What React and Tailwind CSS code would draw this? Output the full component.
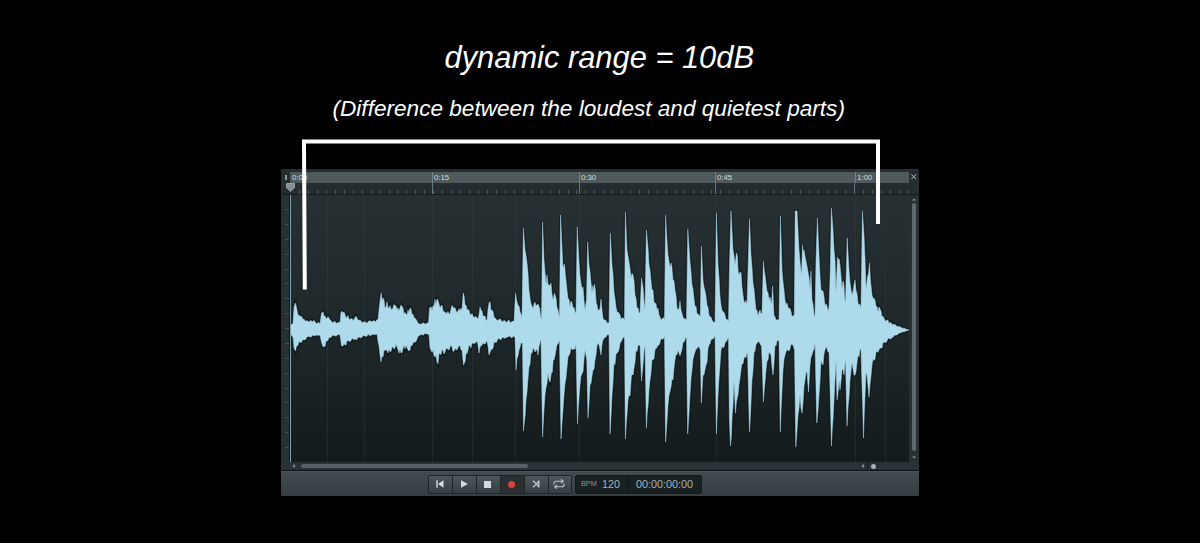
import React from 'react';

// Where the track's own 619x267 area starts
const OFFSET_X = 290;
const OFFSET_Y = 195;

const upper = [
  291, 325, 293, 324, 294, 307, 295.5, 303, 297, 310, 299, 315, 302, 317, 305, 321, 309, 322, 313, 321, 320, 324, 321.5, 313,
  323, 312, 325, 316, 329, 318, 332, 322, 340, 323, 341, 312, 343, 313, 347, 317, 351, 319, 357, 318, 361, 321, 366, 323,
  371, 321, 375, 322, 378, 320, 379, 310, 380.5, 297, 383, 298, 386, 307, 387, 302, 391, 309, 396, 306, 399, 311, 401, 305,
  404, 314, 407, 315, 410, 308, 413, 314, 417, 321, 420, 324, 427, 323, 428.5, 323, 429.5, 308, 432, 311, 434, 306, 437, 299,
  439, 304, 442, 305, 445, 312, 449, 314, 453, 307, 457, 313, 460, 311, 462, 310, 463.2, 293, 466, 305, 469, 310, 473, 316,
  478, 319, 480, 307, 483, 316, 487, 320, 489, 303, 492, 310, 496, 319, 505, 321, 514, 322, 515.5, 293, 517, 302, 520, 312,
  522, 318, 523.4, 228, 525, 250, 527, 263, 528, 273, 530, 298, 532, 306, 536, 306, 538, 304, 541.5, 319, 542.6, 222, 544, 260,
  546, 285, 547, 275, 549, 285, 551, 283, 553, 300, 554.5, 293, 557, 308, 559.5, 318, 560.6, 215, 562, 247, 563, 268,
  564.5, 264, 567, 290, 570, 307, 571, 301, 573, 308, 576, 314, 577.2, 227, 579, 262, 581, 283, 583, 287, 585, 310, 586.5, 300,
  587.7, 242, 589, 265, 592, 293, 594.5, 284, 597, 305, 599, 310, 601, 299, 603, 318, 607, 323, 609, 323, 610.3, 233, 612, 265,
  614, 292, 616, 307, 620, 315, 624.5, 321, 625.4, 212, 627, 250, 629, 262, 631, 278, 633, 275, 635, 295, 638, 308, 640, 313,
  641.5, 278, 643, 287, 645, 310, 646.4, 230, 649, 265, 652, 290, 655, 303, 658, 308, 660, 317, 664.5, 320, 665.6, 215,
  668, 255, 670, 267, 671.5, 263, 673, 280, 675, 290, 678, 310, 680, 301, 683, 317, 686.5, 321, 687.8, 229, 690, 262, 692, 285,
  695, 307, 698, 314, 700.3, 317, 701.4, 246, 703, 280, 706, 296, 709, 315, 713, 322, 715, 323, 716.4, 213, 718, 265, 721, 305,
  725, 315, 728.5, 322, 729.5, 265, 731, 211, 733, 250, 735, 265, 736.5, 253, 739, 275, 741, 272, 743, 295, 747, 305,
  748.3, 260, 749.5, 219, 751, 255, 753, 283, 756, 310, 758, 316, 760, 310, 762, 313, 763.4, 261, 766, 283, 769, 300, 770, 297,
  771.5, 305, 772.6, 286, 774, 316, 779, 321, 780.4, 216, 782, 270, 785, 300, 788, 307, 793, 316, 794.3, 315, 795.2, 211,
  797, 211, 798, 230, 800, 262, 801.5, 276, 802.5, 245, 805, 256, 807, 266, 810, 290, 811, 271, 812, 300, 815, 317, 816, 260,
  817.4, 218, 819, 255, 821, 290, 823, 291, 825, 306, 829, 308, 830.3, 270, 831.4, 208, 833, 230, 835, 260, 836, 293,
  837.5, 257, 840, 265, 842, 290, 843, 281, 845.5, 302, 847.2, 238, 849, 270, 852, 295, 855, 280, 858, 303, 861, 309,
  862.4, 211, 864, 235, 866, 290, 867.5, 277, 869.5, 263, 872, 295, 875, 300, 878, 312, 879, 307, 882, 317, 890, 323, 900, 327,
  909, 330,
];

const lower = [
  291, 334, 293, 337, 294, 348, 295.5, 351, 298, 345, 302, 341, 308, 337, 316, 335, 320, 335, 322, 344, 324, 346, 327, 341,
  332, 336, 340, 335, 341.5, 346, 343, 346, 348, 341, 355, 339, 365, 336, 377, 334, 379, 346, 381, 362, 383, 357, 386, 350,
  388, 353, 392, 347, 397, 347, 401, 353, 404, 345, 409, 351, 412, 346, 417, 339, 420, 335, 427, 334, 429, 335, 430, 348,
  433, 350, 437, 362, 440, 354, 445, 352, 450, 347, 454, 351, 459, 346, 462, 350, 463.5, 365, 466, 353, 470, 346, 475, 343,
  477, 341, 479, 353, 482, 345, 487, 341, 489, 355, 491, 350, 495, 342, 500, 339, 507, 337, 515, 337, 516, 370, 518, 356,
  521, 343, 522.5, 343, 523.5, 431, 526, 400, 529, 367, 531, 353, 536, 350, 538, 355, 541, 339, 542.6, 437, 545, 395, 548, 373,
  550, 382, 551.5, 372, 554, 360, 556, 350, 559.5, 340, 561, 439, 564, 395, 566, 378, 568, 357, 571, 347, 574, 349, 576, 344,
  577.5, 424, 580, 385, 583, 372, 585, 350, 586.8, 360, 588, 418, 590, 385, 593, 370, 595, 360, 598, 343, 601, 355, 603, 340,
  607, 335, 609, 335, 610, 434, 612, 395, 614, 363, 618, 352, 622, 340, 624.5, 337, 625.4, 439, 628, 400, 630, 396, 631.5, 375,
  634, 368, 636, 350, 640, 345, 641.5, 381, 643, 365, 645, 345, 646.4, 428, 649, 390, 652, 360, 658, 345, 664.5, 336,
  665.6, 442, 668, 405, 671, 387, 673, 380, 675, 360, 678, 350, 680, 356, 683, 342, 686.5, 338, 687.7, 434, 690, 395, 692, 370,
  695, 352, 698, 347, 700.3, 350, 701.3, 403, 703, 375, 706, 365, 709, 345, 715, 335, 716.4, 434, 718, 395, 721, 350, 725, 343,
  728.5, 337, 729.4, 420, 730.5, 446, 733, 405, 734, 380, 735.5, 413, 738, 395, 741, 370, 744, 358, 747.5, 352, 749.5, 432,
  752, 380, 754, 353, 758, 342, 761.5, 346, 763.4, 402, 766, 370, 769, 352, 771, 355, 773, 375, 775, 345, 779, 340, 780.3, 432,
  783, 370, 786, 352, 793, 345, 794.5, 350, 795.8, 447, 798, 415, 800, 395, 802, 413, 805, 380, 807, 372, 808.5, 392, 810, 365,
  812, 355, 815, 343, 816.8, 423, 819, 395, 821, 360, 823, 365, 825, 350, 829, 351, 831.5, 446, 834, 400, 836, 360, 837, 400,
  839, 380, 840, 390, 842, 370, 844, 375, 845.5, 358, 847, 426, 850, 380, 852, 362, 855, 375, 858, 355, 861, 350, 863.5, 438,
  866, 372, 869, 397, 872, 365, 876, 352, 880, 348, 885, 342, 892, 337, 900, 333, 909, 330,
];

// Fine serration between the measured peaks
const JITTER = [0, 2.6, -1.4, 3.2, -2.4, 1.2, -3.2, 2, -0.8];

const toPoints = (flat, side) => {
  const points = [];
  for (let i = 0; i < flat.length; i += 2) {
    const x = flat[i];
    const y = flat[i + 1];
    points.push([x - OFFSET_X, y - OFFSET_Y]);
    const nextX = flat[i + 2];
    const nextY = flat[i + 3];
    if (nextX === undefined || nextX - x < 1.8) continue;
    const steps = Math.round(nextX - x);
    for (let s = 1; s < steps; s++) {
      const t = s / steps;
      const baseY = y + (nextY - y) * t;
      const scale = Math.min(1.4, Math.abs(baseY - 330) / 20);
      const shift = JITTER[(i + s * 4) % JITTER.length] * scale * side;
      points.push([x + (nextX - x) * t - OFFSET_X, baseY + shift - OFFSET_Y]);
    }
  }
  return points;
};

const wavePath = `M${[...toPoints(upper, 1), ...toPoints(lower, -1).reverse()]
  .map(([x, y]) => `${x.toFixed(2)} ${y.toFixed(2)}`)
  .join('L')}Z`;

const gridLines = [37, 74, 142, 182, 225, 289, 426, 565, 595];
const majorTicks = [142, 289, 425, 564];
const minorTicks = Array.from({ length: 69 }, (_, i) => 9 + i * 8.95);

const Ruler = () => (
  <div className="flex h-[26px] border-b border-[#141b1d] pt-[3px]">
    <div className="flex w-[9px] justify-center pt-[3px]">
      <div className="h-[5px] w-[2px] bg-[#8b9699]" />
    </div>
    <div className="w-[619px]">
      {/* Time labels */}
      <div className="grid h-[11px] grid-cols-[142px_147px_136px_140px_54px] bg-[#50595c] text-[7.8px] leading-[11px] text-[#d3dcdf]">
        <span className="pl-[2px]">0:00</span>
        <span className="border-l border-[#77848a] pl-[1px]">0:15</span>
        <span className="border-l border-[#77848a] pl-[1px]">0:30</span>
        <span className="border-l border-[#77848a] pl-[1px]">0:45</span>
        <span className="border-l border-[#77848a] pl-[1px]">1:00</span>
      </div>
      {/* Ticks */}
      <svg className="block" width="619" height="11" viewBox="0 0 619 11" shapeRendering="crispEdges">
        {minorTicks.map((x) => (
          <rect key={x} x={Math.round(x)} y="7" width="1" height="4" fill="#4f5a5e" />
        ))}
        {majorTicks.map((x) => (
          <rect key={x} x={x} y="0" width="1" height="11" fill="#66747a" />
        ))}
      </svg>
    </div>
    <div className="flex w-[10px] justify-center pt-[2px]">
      <svg width="5.5" height="5.5" viewBox="0 0 5 5">
        <path d="M.3 .3L4.7 4.7M4.7 .3L.3 4.7" stroke="#b3bdc1" strokeWidth="0.9" />
      </svg>
    </div>
  </div>
);

const Waveform = () => (
  <svg className="block" width="619" height="267" viewBox="0 0 619 267">
    <defs>
      <linearGradient id="track" x1="0" y1="0" x2="0" y2="1">
        <stop offset="0" stopColor="#273032" />
        <stop offset="0.5" stopColor="#1e2729" />
        <stop offset="1" stopColor="#141b1d" />
      </linearGradient>
    </defs>
    <rect width="619" height="267" fill="url(#track)" />
    {gridLines.map((x) => (
      <rect key={x} x={x} y="0" width="1" height="267" fill="#334044" opacity="0.4" />
    ))}
    <path d={wavePath} fill="none" stroke="#080d10" strokeWidth="3" opacity="0.5" />
    <path d={wavePath} fill="#aedbec" stroke="#aedbec" strokeWidth="0.5" />
    <rect x="0" y="0" width="1" height="267" fill="#7fa3b0" />
  </svg>
);

const LevelScale = () => (
  <div className="flex w-[9px] flex-col items-end justify-between border-r border-[#11181a] bg-[#273033] py-[14px] pl-[3px]">
    {Array.from({ length: 17 }, (_, i) => (
      <div key={i} className="h-px w-[4px] bg-[#465155]" />
    ))}
  </div>
);

const TransportButton = ({ children, active = false, last = false }) => (
  <div
    className={`flex h-[17px] items-center justify-center pr-[2px] ${last ? 'w-[22px]' : 'w-6 border-r border-[#1b2326]'} ${
      active ? 'bg-[#2b2f30]' : 'bg-gradient-to-b from-[#4c575c] to-[#363f43]'
    }`}
  >
    {children}
  </div>
);

const Transport = () => (
  <div className="flex h-[25px] items-center border-t border-[#4d575b] bg-gradient-to-b from-[#424c50] to-[#353e41] pl-[147px]">
    <div className="flex h-[19px] rounded-[2px] border border-[#1b2326]">
      <TransportButton>
        <svg width="8" height="8" viewBox="0 0 8 8" fill="#d5dee1">
          <path d="M.3 .3h1.4v7.4H.3zM7.5 .3v7.4L2 4z" />
        </svg>
      </TransportButton>
      <TransportButton>
        <svg width="8" height="8" viewBox="0 0 8 8" fill="#d5dee1">
          <path d="M1 .3L7.8 4 1 7.7z" />
        </svg>
      </TransportButton>
      <TransportButton>
        <div className="h-[7px] w-[7px] bg-[#d0dadd]" />
      </TransportButton>
      <TransportButton active>
        <div className="h-[7px] w-[7px] rounded-full bg-[#dc4337]" />
      </TransportButton>
      <TransportButton>
        <svg width="8" height="8" viewBox="0 0 8 8" fill="none" stroke="#c3cdd0" strokeWidth="1.2">
          <path d="M1 .8L4.6 4 1 7.2M6.9 .5v7M6.6 1L4.6 4l2 3" />
        </svg>
      </TransportButton>
      <TransportButton last>
        <svg width="12" height="10" viewBox="0 0 12 10" fill="none" stroke="#b9c4c8" strokeWidth="1.1">
          <path d="M1 5.4V4.2Q1 2.2 3 2.2H10M8 .3L10.2 2.2 8 4.1M11 4.6V5.8Q11 7.8 9 7.8H2M4 5.9L1.8 7.8 4 9.7" />
        </svg>
      </TransportButton>
    </div>
    <div className="ml-[3px] flex h-[19px] items-center rounded-[2px] border border-[#12191b] bg-[#192123] text-[#a5b4b9]">
      <div className="flex h-full w-[52px] items-center border-r border-[#0f1517] pl-[5px]">
        <span className="w-[21px] text-[7.3px] text-[#85949a]">BPM</span>
        <span className="text-[10.7px]">120</span>
      </div>
      <div className="w-[73px] pt-px pl-[8px] text-[10.8px] whitespace-nowrap">00:00:00:00</div>
    </div>
  </div>
);

const Editor = () => (
  <div className="relative h-[327px] w-[638px] bg-[#252d30]">
    <Ruler />
    <div className="flex h-[267px]">
      <LevelScale />
      <Waveform />
      {/* Vertical scrollbar */}
      <div className="flex w-[10px] flex-col items-center bg-[#273033] py-[3px]">
        <svg width="4" height="3" viewBox="0 0 4 3">
          <path d="M0 2.5L2 .5l2 2z" fill="#899599" />
        </svg>
        <div className="mt-[2px] mb-[5px] w-[4px] flex-1 rounded-full bg-[#5d6a6f]" />
        <svg width="4" height="3" viewBox="0 0 4 3">
          <path d="M0 .5L2 2.5l2-2z" fill="#899599" />
        </svg>
      </div>
    </div>
    {/* Horizontal scrollbar */}
    <div className="flex h-[9px] items-center border-b border-[#0c1214] bg-[#293235] pl-[11px]">
      <svg width="3" height="4" viewBox="0 0 3 4">
        <path d="M2.8 0v4L.5 2z" fill="#8d999d" />
      </svg>
      <div className="ml-[6px] h-[4px] w-[227px] rounded-full bg-[#566165]" />
      <svg className="ml-[333px]" width="3" height="4" viewBox="0 0 3 4">
        <path d="M2.8 0v4L.5 2z" fill="#8d999d" />
      </svg>
      <div className="ml-[3px] h-[8px] w-px bg-[#12191b]" />
      <div className="ml-[3px] h-[5px] w-[5px] rounded-full bg-[#a8b1b4]" />
    </div>
    <Transport />
    {/* Playhead */}
    <svg className="absolute top-[14px] left-[5px]" width="9" height="9" viewBox="0 0 9 9">
      <path d="M.5 .5h8v4.2L4.5 8.5 .5 4.7z" fill="#858e91" stroke="#a9b3b6" strokeWidth="0.8" />
    </svg>
  </div>
);

export default function App() {
  return (
    <div className="relative h-[543px] w-[1200px] overflow-hidden bg-black font-['Liberation_Sans',Arial,sans-serif]">
      <div className="flex flex-col items-start">
        <h1 className="mt-[40px] ml-[444.5px] text-[30.85px] leading-[36px] whitespace-nowrap text-white italic">
          dynamic range = 10dB
        </h1>
        <p className="mt-[20px] ml-[332.5px] text-[22.6px] leading-[26px] whitespace-nowrap text-white italic">
          (Difference between the loudest and quietest parts)
        </p>
        <div className="mt-[47px] ml-[281px]">
          <Editor />
        </div>
      </div>

      {/* Range bracket */}
      <svg className="absolute top-[139px] left-[302px]" width="579" height="152" viewBox="0 0 579 152">
        <path d="M2.8 150.5L2 2.5H576V85" fill="none" stroke="#fff" strokeWidth="4" />
      </svg>
    </div>
  );
}
